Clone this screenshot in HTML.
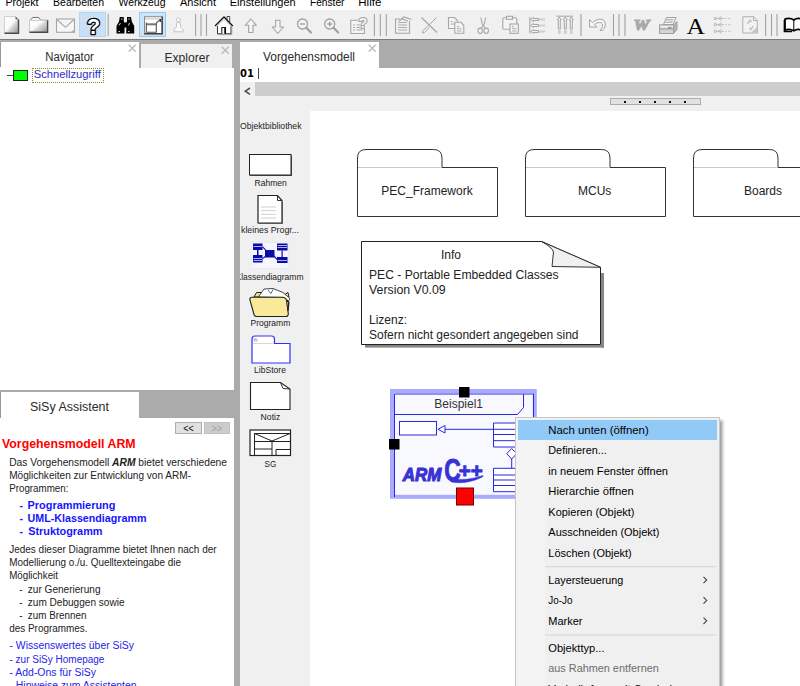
<!DOCTYPE html>
<html lang="de">
<head>
<meta charset="utf-8">
<title>SiSy</title>
<style>
html,body{margin:0;padding:0;}
body{width:800px;height:686px;overflow:hidden;position:relative;background:#fff;font-family:"Liberation Sans",sans-serif;color:#000;}
div{position:absolute;box-sizing:border-box;white-space:nowrap;}
svg{position:absolute;overflow:visible;}
/* menu */
#menu{left:0;top:0;width:800px;height:10px;background:#fff;overflow:hidden;}
/* toolbar */
#tb{left:0;top:10px;width:800px;height:29px;background:#f0f0f0;}
#tbline{left:0;top:38.500px;width:800px;height:1.500px;background:#7c7c7c;}
#tbline2{left:0;top:40px;width:800px;height:2px;background:#ababab;}
.hl{background:#cce4f7;border:1px solid #99d1ff;}
/* left */
#left{left:0;top:42px;width:234px;height:644px;background:#fff;}
#vdiv{left:233.500px;top:42px;width:6.500px;height:644px;background:#ababab;}
/* right */
#right{left:240px;top:42px;width:560px;height:644px;background:#fff;}


</style>
</head>
<body>
<div id="menu"></div>

<div id="tb">
  <div class="hl" style="left:79px;top:2px;width:27.200px;height:25px;background:#c9e0f7;border-color:#b4d4f4"></div>
  <div class="hl" style="left:139.200px;top:2px;width:26.800px;height:25px;background:#cce4f7;border-color:#92c9f7"></div>
<svg width="800" height="29" viewBox="0 10 800 29" style="left:0;top:0">
  <defs>
    <linearGradient id="g1" x1="0" y1="0" x2="1" y2="1">
      <stop offset="0" stop-color="#fff"/><stop offset="0.480" stop-color="#fafafa"/><stop offset="0.600" stop-color="#d8d8d8"/><stop offset="0.800" stop-color="#b8b8b8"/><stop offset="1" stop-color="#8c8c8c"/>
    </linearGradient>
  </defs>
  <!-- separators -->
  <g stroke="#a2a2a2" stroke-width="1.100">
    <path d="M108.200 14 V36 M195.600 14 V36 M201 14 V36 M206.500 14 V36 M374.400 14 V36 M380.300 14 V36 M386.300 14 V36 M581 14 V36 M613.500 14 V36 M619 14 V36 M625 14 V36 M765.600 14 V36 M771.500 14 V36 M777 14 V36"/>
  </g>
  <!-- new doc -->
  <path d="M4.500 16.500 H15.500 L18.300 19.300 V33 H4.500 Z" fill="url(#g1)" stroke="#c8c8c8" stroke-width="0.800"/>
  <path d="M4.500 33.200 H18.500 V19.500" fill="none" stroke="#4a4a4a" stroke-width="1.400"/>
  <path d="M15.500 16.500 V19.300 H18.300 Z" fill="#555"/>
  <!-- folder -->
  <path d="M29.500 32.200 V20 L32.500 17.300 H38.800 L40.500 19.800 H47.500 V32.200 Z" fill="url(#g1)" stroke="#c0c0c0" stroke-width="0.800"/>
  <path d="M31 19.700 L32.800 17.500 H38.600 L40.300 19.700" fill="none" stroke="#777" stroke-width="1"/>
  <path d="M29.500 32.300 H47.600 V20.300" fill="none" stroke="#4a4a4a" stroke-width="1.400"/>
  <path d="M30 20.300 H47" stroke="#bbb" stroke-width="0.800"/>
  <!-- envelope -->
  <rect x="56.500" y="19" width="18" height="13.300" fill="#f6f6f6" stroke="#a6a6a6" stroke-width="1.100"/>
  <path d="M57 19.500 L65.500 27.300 L74 19.500" fill="none" stroke="#a6a6a6" stroke-width="1.100"/>
  <path d="M74.500 29 V32.300 H71 Z" fill="#b0b0b0"/>
  <!-- question mark -->
  <text x="93.500" y="33.600" text-anchor="middle" font-family="Liberation Sans, sans-serif" font-weight="bold" font-size="21.500" fill="#fff" stroke="#000" stroke-width="2.600" stroke-linejoin="round" paint-order="stroke">?</text>
  <!-- binoculars -->
  <g fill="#000">
    <path d="M119.800 17 H123.800 V21 L124.500 24 V33.500 H116.500 V26 L119 21.500 Z"/>
    <path d="M127 17 H131 L131.800 21.500 L134.200 26 V33.500 H126.300 V24 L127 21 Z"/>
    <rect x="123.500" y="22.500" width="4" height="5"/>
  </g>
  <path d="M121 19 h1.500 M128.300 19 h1.500 M119 25.500 l1.500 -2.500 M128.500 25.500 l1 -2.500 M118.500 31.500 h1.500 M128 31.500 h1.500" stroke="#e8e8e8" stroke-width="0.900" fill="none"/>
  <!-- window icon -->
  <rect x="144.500" y="16.700" width="17.500" height="17" fill="#fff" stroke="#8a8a8a" stroke-width="1"/>
  <rect x="145" y="17.200" width="16.500" height="2.600" fill="#dcdcdc"/>
  <path d="M144.300 33.800 H162.200 V16.500" fill="none" stroke="#404040" stroke-width="1.400"/>
  <path d="M146 23 H156 L160 19.500 V32 H146 Z" fill="#fff" stroke="none"/>
  <path d="M146 23.300 H156 V25.300 H146 Z" fill="#777"/>
  <path d="M146.300 22.500 V32.200 H156.300 V23 L160.500 19.300" fill="none" stroke="#555" stroke-width="1.100"/>
  <path d="M160.300 19 v3" stroke="#222" stroke-width="1.200"/>
  <!-- pawn -->
  <path d="M178.500 17.800 a2 2 0 1 1 -0.010 0 Z M177 22.300 H180 L181 27.500 L183 29.500 V31.800 H174.200 V29.500 L176.200 27.500 Z" fill="#fafafa" stroke="#c2c2c2" stroke-width="1"/>
  <!-- house -->
  <path d="M227 20 V16.500 H229.700 V22" fill="#fff" stroke="#444" stroke-width="1"/>
  <path d="M217.300 25 V34 H231.300 V25 L224 17.500 Z" fill="#fff" stroke="none"/>
  <path d="M217.500 26 V33.800 H231 V26" fill="none" stroke="#333" stroke-width="1"/>
  <path d="M231.800 26.500 V34.600 H217.500" fill="none" stroke="#9a9a9a" stroke-width="0.900"/>
  <path d="M215 26 L224 17 L232.800 26" fill="none" stroke="#111" stroke-width="1.300"/>
  <path d="M216.500 26.800 L224 19.300 L231.500 26.800" fill="none" stroke="#b0b0b0" stroke-width="0.700"/>
  <path d="M221.800 33.800 V27.500 H225.500 V33.800" fill="#fff" stroke="#222" stroke-width="1.100"/>
  <path d="M225 28 V33.800" stroke="#000" stroke-width="1.400"/>
  <!-- up / down arrows -->
  <path d="M250.800 19 L256.400 25.300 H253 V32.500 H248.600 V25.300 H245.200 Z" fill="#f4f4f4" stroke="#a4a4a4" stroke-width="1.100" stroke-linejoin="round"/>
  <path d="M277.800 33.500 L283.500 27 H280 V20.200 H275.600 V27 H272.200 Z" fill="#f4f4f4" stroke="#a4a4a4" stroke-width="1.100" stroke-linejoin="round"/>
  <!-- zoom out / in -->
  <g fill="none" stroke="#a0a0a0">
    <circle cx="302.500" cy="24" r="5" stroke-width="1.300" fill="#f4f4f4"/>
    <path d="M300 24 H305" stroke-width="1.400"/>
    <path d="M306.300 27.800 L311 32.500" stroke-width="2.200" stroke-linecap="round"/>
    <circle cx="329.700" cy="24" r="5" stroke-width="1.300" fill="#f4f4f4"/>
    <path d="M327.200 24 H332.200 M329.700 21.500 V26.500" stroke-width="1.400"/>
    <path d="M333.500 27.800 L338.200 32.500" stroke-width="2.200" stroke-linecap="round"/>
  </g>
  <!-- doc with ? -->
  <g fill="none" stroke="#a6a6a6" stroke-width="1.100">
    <path d="M358 20.200 H350.800 V33.500 H364.500 V28.500" fill="#f4f4f4"/>
    <path d="M353 25 h2 M356.500 25 h4 M353 27.500 h2 M356.500 27.500 h4 M353 30 h2 M356.500 30 h6"/>
  </g>
  <text x="363" y="27.800" text-anchor="middle" font-family="Liberation Sans, sans-serif" font-weight="bold" font-size="14.500" fill="#f4f4f4" stroke="#a0a0a0" stroke-width="2" stroke-linejoin="round" paint-order="stroke">?</text>
  <!-- doc with pen -->
  <g fill="none" stroke="#a6a6a6" stroke-width="1.100">
    <path d="M400 19 H395.500 V33.300 H409.500 V21"/>
    <path d="M398 22.500 h9 M398 25 h9 M398 27.500 h9 M398 30 h9" stroke-width="0.900"/>
    <path d="M399 21 L404 17 L411.500 19.500 M402 19 l6 2" stroke-width="1.300"/>
  </g>
  <!-- X -->
  <g fill="none" stroke="#a6a6a6">
    <path d="M421.500 17.500 L437 32.500" stroke-width="1.200"/>
    <path d="M436.500 17.500 L428 26" stroke-width="1"/>
    <path d="M428 25.500 L422.800 31 L422.500 33 L424.500 32.500 L429.500 27" stroke-width="1" fill="#f4f4f4"/>
  </g>
  <!-- copy -->
  <g fill="#f4f4f4" stroke="#a6a6a6" stroke-width="1.100">
    <path d="M448.500 17.500 H454.500 L457.500 20.500 V28.500 H448.500 Z"/>
    <path d="M454.800 22.300 H460.800 L463.800 25.300 V33.300 H454.800 Z"/>
    <path d="M450.500 21.500 h2 M450.500 24 h4 M457 26.500 h2 M457 28.700 h4.500 M457 31 h4.500" fill="none" stroke-width="0.900"/>
  </g>
  <!-- scissors -->
  <g fill="none" stroke="#a6a6a6" stroke-width="1.100">
    <path d="M480.800 17.500 L482.500 25 L485.500 28.500 M485.700 17.500 L484 25 L481 28.500"/>
    <ellipse cx="480.200" cy="30.800" rx="2.200" ry="2.700" fill="#f4f4f4"/>
    <ellipse cx="486.200" cy="30.800" rx="2.200" ry="2.700" fill="#f4f4f4"/>
  </g>
  <!-- paste -->
  <g fill="#f4f4f4" stroke="#a6a6a6" stroke-width="1.100">
    <rect x="502.800" y="17.800" width="14" height="11.500" rx="1.500"/>
    <rect x="506.500" y="16.300" width="6" height="3" />
    <rect x="510" y="24" width="8.300" height="9.300"/>
    <path d="M512 26.500 h2 M512 28.700 h4.500 M512 31 h4.500" fill="none" stroke-width="0.900"/>
  </g>
  <!-- align left -->
  <g fill="none" stroke="#a6a6a6" stroke-width="1">
    <path d="M529.800 17 V33.500"/>
    <path d="M530.500 19.500 l3 -2 v1 h5 v2 h-5 v1 z M530.500 25.500 l3 -2 v1 h5 v2 h-5 v1 z M530.500 31.500 l3 -2 v1 h5 v2 h-5 v1 z"/>
    <path d="M540 18.500 v2 M542 18.500 v2 M544 18.500 v2 M540 24.500 v2 M542 24.500 v2 M544 24.500 v2 M540 30.500 v2 M542 30.500 v2 M544 30.500 v2" stroke-width="0.900"/>
  </g>
  <!-- align top -->
  <g fill="none" stroke="#a6a6a6" stroke-width="1">
    <path d="M556.500 16.200 H573"/>
    <path d="M559.300 17 l2 3 h-1 v9 h-2 v-9 h-1 z M565.300 17 l2 3 h-1 v9 h-2 v-9 h-1 z M571.300 17 l2 3 h-1 v9 h-2 v-9 h-1 z"/>
    <path d="M558 31 h2.600 M564 31 h2.600 M570 31 h2.600 M558 33 h2.600 M564 33 h2.600 M570 33 h2.600" stroke-width="0.900"/>
  </g>
  <!-- undo -->
  <path d="M589.500 19.500 V27 H597 L594.500 24.500 Q600 20.500 602.500 24 Q603.500 27 600 30.500 L602.500 30.500 Q607 26 604.500 21 Q600 16.500 592.500 22.500 Z" fill="#f4f4f4" stroke="#a6a6a6" stroke-width="1" stroke-linejoin="round"/>
  <!-- W -->
  <text x="641.500" y="30" text-anchor="middle" font-family="Liberation Serif, serif" font-weight="bold" font-style="italic" font-size="15.500" fill="#a8a8a8" stroke="#a8a8a8" stroke-width="1.200" textLength="16" lengthAdjust="spacingAndGlyphs">W</text>
  <!-- printer -->
  <g stroke="#a0a0a0" stroke-width="1">
    <path d="M663.500 24.500 L666.500 17.500 H676 L673 24.500 Z" fill="#f4f4f4"/>
    <path d="M666.500 19.500 h7 M666 21 h7 M665.300 22.500 h7" stroke-width="0.700" fill="none"/>
    <path d="M659.500 25 H673.500 L677 21.500 V29.500 L673.500 33.500 H659.500 Z" fill="#b4b4b4"/>
    <rect x="659.500" y="25" width="14" height="4" fill="#e8e8e8"/>
    <rect x="659.500" y="29" width="14" height="4.500" fill="#d4d4d4"/>
    <path d="M668 27.800 h3.500" stroke="#777" stroke-width="1.100"/>
  </g>
  <!-- A -->
  <text x="695.700" y="33.700" text-anchor="middle" font-family="Liberation Serif, serif" font-size="23.500" fill="#000" textLength="18.500" lengthAdjust="spacingAndGlyphs">A</text>
  <!-- arrows list -->
  <g fill="none" stroke="#b6b6b6" stroke-width="0.900">
    <path d="M714.300 17.500 h2 v2 h-2 z M714.300 23.700 h2 v2 h-2 z M714.300 30.300 h2 v2 h-2 z"/>
    <path d="M716.500 18.500 H724 M721.500 16.500 L718.500 18.500 L721.500 20.500 M716.500 24.700 H724 M721.500 22.700 L718.500 24.700 L721.500 26.700 M716.500 31.300 H724 M721.500 29.300 L718.500 31.300 L721.500 33.300"/>
    <path d="M725.500 18.500 h1.200 M728 18.500 h1.200 M730 18.500 h0.800 M725.500 24.700 h1.200 M728 24.700 h1.200 M730 24.700 h0.800 M725.500 31.300 h1.200 M728 31.300 h1.200 M730 31.300 h0.800"/>
  </g>
  <!-- doc arrows -->
  <path d="M742.800 16.700 H753.500 L757.300 20.500 V33 H742.800 Z" fill="#f2f2f2" stroke="#b0b0b0" stroke-width="1"/>
  <path d="M753.500 16.700 V20.500 H757.300" fill="none" stroke="#b0b0b0" stroke-width="0.900"/>
  <path d="M757 27 V32.700 H751 Z" fill="#c4c4c4"/>
  <path d="M747.500 24 Q747.500 21 750.500 21 M749.500 19.500 L751.500 21 L749.500 22.500 M753 26 Q753 29 750 29 M751.500 27.500 L749.500 29 L751.500 30.500" fill="none" stroke="#b4b4b4" stroke-width="1"/>
  <!-- book -->
  <path d="M785 19 Q790 17.500 793.800 20 Q797 17.500 802 19 V30 Q797 28.500 793.800 30.800 Q790 28.500 785 30 Z" fill="#fff" stroke="#000" stroke-width="1.800" stroke-linejoin="round"/>
  <path d="M793.800 20 V30.500" stroke="#000" stroke-width="1"/>
  <path d="M784.300 20 V31.500 H792" fill="none" stroke="#000" stroke-width="1.300"/>
</svg>
</div>
<div id="tbline"></div><div id="tbline2"></div>

<!-- LEFT PANEL -->
<div id="left">
  <div style="left:0;top:0;width:1px;height:25px;background:#9a9a9a"></div>
  <svg style="left:127.9px;top:1.9px" width="9" height="9"><path d="M0.700 0.700 L7.800 7.800 M7.800 0.700 L0.700 7.800" stroke="#bebebe" stroke-width="1.500" fill="none"/></svg>
  <div style="left:139px;top:0;width:102px;height:25.700px;background:#ababab"></div>
  <div style="left:141px;top:2px;width:91.300px;height:23.700px;background:#f0f0f0"></div>
  <svg style="left:221.4px;top:4.2px" width="9" height="9"><path d="M0.700 0.700 L7.800 7.800 M7.800 0.700 L0.700 7.800" stroke="#bebebe" stroke-width="1.500" fill="none"/></svg>
  <!-- tree -->
  <div style="left:7px;top:33px;width:7px;height:1px;background:#444"></div>
  <div style="left:13.200px;top:28px;width:14.500px;height:10.500px;background:#00ff00;border:1px solid #222;border-right-width:1.600px;border-bottom-width:1.600px"></div>
  <div style="left:32px;top:26px;width:72px;height:15px;border:1px dotted #8a8a20"></div>
  <!-- assist tab -->
  <div style="left:0;top:347.800px;width:234px;height:28.600px;background:#ababab"></div>
  <div style="left:0;top:350.400px;width:139px;height:26px;background:#fff;border-left:1px solid #9a9a9a"></div>
  <div style="left:175.200px;top:379.500px;width:26.600px;height:12.400px;background:#e1e1e1;border:1px solid #adadad"></div>
  <div style="left:203.500px;top:379.500px;width:26.600px;height:12.400px;background:#cccccc;border:1px solid #bfbfbf"></div>
  <svg style="left:175px;top:379px" width="56" height="14" viewBox="175 421 56 14" font-family="Liberation Sans, sans-serif" font-size="10.500">
    <text x="183.300" y="432.300" textLength="10.600" lengthAdjust="spacingAndGlyphs" fill="#111">&lt;&lt;</text>
    <text x="211.500" y="432.300" textLength="10.600" lengthAdjust="spacingAndGlyphs" fill="#a0a0a0">&gt;&gt;</text>
  </svg>
  <div id="assist" style="left:0;top:376.400px;width:233.500px;height:270px;overflow:hidden">
  <svg width="234" height="270" viewBox="0 418.400 234 270" style="left:0;top:0" font-family="Liberation Sans, sans-serif" font-size="10" fill="#222">
    <text x="2" y="448.4" textLength="133.6" lengthAdjust="spacingAndGlyphs" font-size="12.300" font-weight="bold" fill="#ff0000">Vorgehensmodell ARM</text>
    <text x="9.2" y="466.4" textLength="217.8" lengthAdjust="spacingAndGlyphs" >Das Vorgehensmodell <tspan font-weight="bold" font-style="italic">ARM</tspan> bietet verschiedene</text>
    <text x="9.2" y="479.3" textLength="181.8" lengthAdjust="spacingAndGlyphs" >Möglichkeiten zur Entwicklung von ARM-</text>
    <text x="9.2" y="492.2" textLength="59.2" lengthAdjust="spacingAndGlyphs" >Programmen:</text>
    <text x="19.5" y="509.7" textLength="3.5" lengthAdjust="spacingAndGlyphs" font-weight="bold" fill="#1414ff">-</text>
    <text x="27.6" y="509.7" textLength="87.8" lengthAdjust="spacingAndGlyphs" font-weight="bold" fill="#1414ff">Programmierung</text>
    <text x="19.5" y="522.6" textLength="3.5" lengthAdjust="spacingAndGlyphs" font-weight="bold" fill="#1414ff">-</text>
    <text x="27.6" y="522.6" textLength="118.8" lengthAdjust="spacingAndGlyphs" font-weight="bold" fill="#1414ff">UML-Klassendiagramm</text>
    <text x="19.5" y="535.6" textLength="3.5" lengthAdjust="spacingAndGlyphs" font-weight="bold" fill="#1414ff">-</text>
    <text x="28.2" y="535.6" textLength="74.3" lengthAdjust="spacingAndGlyphs" font-weight="bold" fill="#1414ff">Struktogramm</text>
    <text x="9.2" y="553.5" textLength="207.4" lengthAdjust="spacingAndGlyphs" >Jedes dieser Diagramme bietet Ihnen nach der</text>
    <text x="9.2" y="566.8" textLength="171.8" lengthAdjust="spacingAndGlyphs" >Modellierung o./u. Quelltexteingabe die</text>
    <text x="9.2" y="579.9" textLength="48.8" lengthAdjust="spacingAndGlyphs" >Möglichkeit</text>
    <text x="19.2" y="593.1" textLength="3.3" lengthAdjust="spacingAndGlyphs" >-</text>
    <text x="27.8" y="593.1" textLength="72.7" lengthAdjust="spacingAndGlyphs" >zur Generierung</text>
    <text x="19.2" y="606.3" textLength="3.3" lengthAdjust="spacingAndGlyphs" >-</text>
    <text x="27.8" y="606.3" textLength="96.7" lengthAdjust="spacingAndGlyphs" >zum Debuggen sowie</text>
    <text x="19.2" y="619.5" textLength="3.3" lengthAdjust="spacingAndGlyphs" >-</text>
    <text x="27.8" y="619.5" textLength="58.6" lengthAdjust="spacingAndGlyphs" >zum Brennen</text>
    <text x="9.2" y="632.6" textLength="78.4" lengthAdjust="spacingAndGlyphs" >des Programmes.</text>
    <text x="9.5" y="649.8" textLength="124.5" lengthAdjust="spacingAndGlyphs" fill="#2424e8">- Wissenswertes über SiSy</text>
    <text x="9.5" y="663.0" textLength="94.9" lengthAdjust="spacingAndGlyphs" fill="#2424e8">- zur SiSy Homepage</text>
    <text x="9.5" y="676.6" textLength="86.5" lengthAdjust="spacingAndGlyphs" fill="#2424e8">- Add-Ons für SiSy</text>
    <text x="9.5" y="689.8" textLength="127.0" lengthAdjust="spacingAndGlyphs" fill="#2424e8">- Hinweise zum Assistenten</text>
  </svg>
  </div>
</div>
<div id="vdiv"></div>

<!-- RIGHT -->
<div id="right">
  <div style="left:139px;top:0;width:421px;height:25.600px;background:#ababab"></div>
  <svg style="left:127.9px;top:1.9px" width="9" height="9"><path d="M0.700 0.700 L7.800 7.800 M7.800 0.700 L0.700 7.800" stroke="#bebebe" stroke-width="1.500" fill="none"/></svg>
  <div style="left:0;top:25.500px;font-family:'DejaVu Sans',sans-serif;font-weight:bold;font-size:10px;line-height:12px;color:#000">01</div>
  <div style="left:17.500px;top:26px;width:1.300px;height:11px;background:#444"></div>
  <div style="left:0;top:40px;width:560px;height:14px;background:#f0f0f0"></div>
  <div style="left:15.200px;top:40px;width:545px;height:13.600px;background:#cdcdcd"></div>
  <svg style="left:0;top:40px" width="15" height="14"><path d="M10 6 L5.300 9.200 L10 12.300" fill="none" stroke="#505050" stroke-width="1.600"/></svg>
  <div style="left:0;top:54px;width:560px;height:590px;background:#f0f0f0"></div>
  <div style="left:369.500px;top:56.200px;width:91.200px;height:7.300px;background:#e1e1e1;border:1px solid #adadad"></div><div style="left:384.2px;top:59px;width:2px;height:2px;background:#111"></div><div style="left:399.2px;top:59px;width:2px;height:2px;background:#111"></div><div style="left:414.2px;top:59px;width:2px;height:2px;background:#111"></div><div style="left:429.2px;top:59px;width:2px;height:2px;background:#111"></div><div style="left:444.1px;top:59px;width:2px;height:2px;background:#111"></div>
  <div style="left:70px;top:68.600px;width:490px;height:576px;background:#fff"></div>
</div>


<!-- LIBRARY -->
<div id="lib" style="left:240px;top:96px;width:70px;height:590px;overflow:hidden">
<svg width="70" height="590" viewBox="240 96 70 590" style="left:0;top:0" font-family="Liberation Sans, sans-serif" font-size="9" fill="#222">
  <text x="240" y="129" font-size="8.800" textLength="61.500" lengthAdjust="spacingAndGlyphs">Objektbibliothek</text>
  <!-- Rahmen -->
  <rect x="250" y="155.500" width="42" height="20.500" fill="#555"/>
  <rect x="249.500" y="154.500" width="41.500" height="20.500" fill="#fff" stroke="#222" stroke-width="1"/>
  <text x="254.500" y="185.800" textLength="32.300" lengthAdjust="spacingAndGlyphs">Rahmen</text>
  <!-- kleines Programm -->
  <path d="M258 195.500 H277.500 L282 200.500 V223 H258 Z" fill="#fff" stroke="#222" stroke-width="1.200"/>
  <path d="M258.500 223.500 H282.500 V202" fill="none" stroke="#555" stroke-width="1"/>
  <path d="M277.500 195.500 V200.500 H282" fill="none" stroke="#333" stroke-width="1"/>
  <path d="M261 207 H276 M261 210.600 H276 M261 214.300 H276 M261 218 H276" stroke="#cfcfcf" stroke-width="1"/>
  <text x="241" y="232.800" textLength="58" lengthAdjust="spacingAndGlyphs">kleines Progr...</text>
  <!-- Klassendiagramm -->
  <rect x="251.500" y="242.500" width="36.500" height="26" fill="#f6f6ff" stroke="#e4e4f4" stroke-width="0.500"/>
  <g fill="#0a0aa8">
    <rect x="253" y="243.500" width="9.500" height="6.500"/>
    <rect x="253" y="255" width="9.500" height="7.500"/>
    <rect x="265" y="250" width="9.500" height="7.500"/>
    <rect x="277" y="243.500" width="10.500" height="7"/>
    <rect x="277" y="257" width="10.500" height="6"/>
    <path d="M257 250 h1.500 v5 h-1.500z M281.500 250.500 h1.200 v6.500 h-1.200z"/>
    <path d="M262.500 246 L266 249.500 L265.200 250.300 L262.500 247.500z M262.500 258 L265 256 L265.600 257 L262.500 259.300z M274.500 255.500 L277 258.500 L277 260 L274 257z"/>
  </g>
  <path d="M253.500 246.500 H262 M253.500 258.500 H262 M253.500 260.500 H262 M277.500 245.500 H287 M277.500 247.500 H287 M277.500 260.500 H287" stroke="#dcdcff" stroke-width="0.800"/>
  <text x="235.500" y="279.800" textLength="68" lengthAdjust="spacingAndGlyphs">Klassendiagramm</text>
  <!-- Programm folder -->
  <path d="M254 297 L256.500 292.500 H263 L265 295 H284 L288 292.500 L289 297 Z" fill="#f6e08a" stroke="#222" stroke-width="1"/>
  <path d="M259 296 L264 289 L273 288.500 L283 292.500 L290 298.500 L288 302 L284 297.500 L259 297 Z" fill="#fff" stroke="#333" stroke-width="0.900" stroke-linejoin="round"/>
  <path d="M268 290 L271 293.500 L273 289.500" fill="none" stroke="#444" stroke-width="0.800"/>
  <path d="M249.800 299.500 Q249.800 297.300 252 297.300 H282 Q286 297.300 286.500 300.500 L288.300 313.500 Q288.500 316.500 285.500 316.500 H257 Q254.500 316.500 254 314.500 Z" fill="#fbe99a" stroke="#222" stroke-width="1.100"/>
  <path d="M286.800 300 L288.800 302.500 L288 311" fill="none" stroke="#222" stroke-width="1.400"/>
  <text x="250.500" y="326.200" textLength="39.800" lengthAdjust="spacingAndGlyphs">Programm</text>
  <!-- LibStore -->
  <path d="M252 363 V339 Q252 336 255 336 H271.500 Q274.500 336 274.500 339 V343.500 H290 V363 Z" fill="#fff" stroke="#3030ff" stroke-width="1.200"/>
  <path d="M253 343.500 H274" stroke="#d8d8d8" stroke-width="1"/>
  <path d="M253.500 338 l3 0 l1.500 3.500 l-4.500 0z" fill="#c8c8c8"/>
  <text x="254.100" y="373" textLength="31.800" lengthAdjust="spacingAndGlyphs">LibStore</text>
  <!-- Notiz -->
  <path d="M250.500 382.500 H280.500 L290 389 V409.500 H250.500 Z" fill="#fff" stroke="#222" stroke-width="1.100"/>
  <path d="M280.500 382.500 L283 388.500 L290 389" fill="none" stroke="#333" stroke-width="1"/>
  <text x="260.600" y="420.200" textLength="19.700" lengthAdjust="spacingAndGlyphs">Notiz</text>
  <!-- SG -->
  <rect x="250" y="430" width="40.500" height="25.500" fill="#fff" stroke="#222" stroke-width="1.200"/>
  <path d="M254.500 455 V433.500 H291 M254.500 433.500 L272 441 L290 433.500 M254.500 441.500 H290 M254.500 449 H272 M272 441 V455 M276 455 V449.500 H290" fill="none" stroke="#222" stroke-width="1"/>
  <text x="264.600" y="467.200" textLength="11.700" lengthAdjust="spacingAndGlyphs">SG</text>
</svg>
</div>
<!-- CANVAS -->
<div id="canvas" style="left:310px;top:111px;width:490px;height:575px;overflow:hidden">
<svg width="490" height="575" viewBox="310 111 490 575" style="left:0;top:0" font-family="Liberation Sans, sans-serif">
  <!-- packages -->
  <g fill="#fff" stroke="#333" stroke-width="1">
    <path id="pk" d="M357.5 216.5 V158 Q357.5 149.5 366 149.5 H433.5 Q442 149.5 442 158 V167.5 H497.5 V216.5 Z"/>
    <path d="M525.5 216.5 V158 Q525.5 149.5 534 149.5 H601.5 Q610 149.5 610 158 V167.5 H665.5 V216.5 Z"/>
    <path d="M693.5 216.5 V158 Q693.5 149.5 702 149.5 H769.5 Q778 149.5 778 158 V167.5 H833.5 V216.5 Z"/>
  </g>
  <g stroke="#c8c8c8" stroke-width="1">
    <path d="M358 167.5 H442 M526 167.5 H610 M694 167.5 H778"/>
  </g>
  <g font-size="12" fill="#222" text-anchor="middle">
    <text x="427" y="195">PEC_Framework</text>
    <text x="594.7" y="195">MCUs</text>
    <text x="763" y="195">Boards</text>
  </g>
  <!-- note -->
  <rect x="365" y="345" width="239" height="2.6" fill="#858585"/>
  <rect x="601" y="273" width="3" height="74.6" fill="#858585"/>
  <path d="M361.500 241.500 H541.500 L600.500 267.300 V344.500 H361.500 Z" fill="#fff" stroke="#222" stroke-width="1"/>
  <path d="M541.500 241.500 Q552 247 553.500 252 L552 266.500 L600.500 267.300 Z" fill="#f0f0f0" stroke="#333" stroke-width="1" stroke-linejoin="round"/>
  <g font-size="12" fill="#222">
    <text x="451" y="258.500" text-anchor="middle">Info</text>
    <text x="369" y="279" textLength="189.600" lengthAdjust="spacingAndGlyphs">PEC - Portable Embedded Classes</text>
    <text x="369" y="294.200" textLength="76.700" lengthAdjust="spacingAndGlyphs">Version V0.09</text>
    <text x="369" y="324">Lizenz:</text>
    <text x="369" y="339">Sofern nicht gesondert angegeben sind</text>
  </g>
  <!-- Beispiel1 -->
  <rect x="392" y="391" width="142.800" height="105.800" fill="#f8f8ff" stroke="#aaaaff" stroke-width="4"/>
  <g fill="none" stroke="#2828e0" stroke-width="1">
    <path d="M394.500 497 V394 H533.500 V497"/>
    <path d="M394.500 414.500 H517.500 L523.500 407.500 V394"/>
    <rect x="399.500" y="421.500" width="37" height="13.500" fill="#fff"/>
    <path d="M445 425.500 L438 429.300 L445 433 Z" fill="#fff"/>
    <path d="M445 429.300 H493"/>
    <path d="M536 423 H493.500 V447 H536 M493.500 429.300 H536 M493.500 434.500 H536 M493.500 440.700 H536" fill="#fff"/>
    <path d="M511.700 448.500 L516.700 453.700 L511.700 459 L506.700 453.700 Z" fill="#fff"/>
    <path d="M511.700 459 V468"/>
    <path d="M536 468.300 H493.500 V491.700 H536 M493.500 475 H536 M493.500 480 H536 M493.500 485.500 H536" fill="#fff"/>
  </g>
  <text x="458.700" y="408.300" font-size="12" fill="#333" text-anchor="middle">Beispiel1</text>
  <!-- ARM C++ logo -->
  <g fill="#3832d2" stroke="#3832d2" font-weight="bold">
    <text x="402.800" y="480.600" font-size="19" font-style="italic" stroke-width="1.100" textLength="38.500" lengthAdjust="spacingAndGlyphs">ARM</text>
    <text x="444.300" y="481.200" font-size="30.500" stroke-width="0.900" textLength="16.500" lengthAdjust="spacingAndGlyphs">C</text>
    <text x="458.800" y="478.200" font-size="20.500" stroke-width="0.900" textLength="24" lengthAdjust="spacingAndGlyphs">++</text>
    <path d="M450 478.500 Q466 481.500 483 475.500 L482.500 477 Q466 485 451 482 Z" stroke-width="0.500"/>
  </g>
  <rect x="459" y="387" width="10.500" height="10.500" fill="#000"/>
  <rect x="389" y="439" width="10.500" height="10.500" fill="#000"/>
  <rect x="456.500" y="488" width="17" height="17" fill="#ff0000" stroke="#700000" stroke-width="1"/>
</svg>
</div>

<!-- CONTEXT MENU -->
<div id="cm" style="left:515px;top:417px;width:204.500px;height:280px;background:#f0f0f0;border:1px solid #c6c6c6;box-shadow:2.500px 2.500px 3px rgba(0,0,0,0.400)">
  <div style="left:0;top:0;width:29px;height:280px;background:#f3f3f3"></div>
  <div style="left:1.500px;top:1.700px;width:199.500px;height:20px;background:#91c9f7"></div>
</div>
<svg width="800" height="686" viewBox="0 0 800 686" style="left:0;top:0;pointer-events:none" font-family="Liberation Sans, sans-serif" font-size="11.500">
<g font-size="11" fill="#000">
  <text x="5.5" y="5.7" textLength="33.0" lengthAdjust="spacingAndGlyphs" >Projekt</text>
  <text x="53" y="5.7" textLength="51.0" lengthAdjust="spacingAndGlyphs" >Bearbeiten</text>
  <text x="118.5" y="5.7" textLength="47.0" lengthAdjust="spacingAndGlyphs" >Werkzeug</text>
  <text x="180" y="5.7" textLength="36.0" lengthAdjust="spacingAndGlyphs" >Ansicht</text>
  <text x="229.8" y="5.7" textLength="65.8" lengthAdjust="spacingAndGlyphs" >Einstellungen</text>
  <text x="310" y="5.7" textLength="34.5" lengthAdjust="spacingAndGlyphs" >Fenster</text>
  <text x="358.3" y="5.7" textLength="23.0" lengthAdjust="spacingAndGlyphs" >Hilfe</text>
</g>
<g font-size="12" fill="#2a2a2a">
  <text x="45.3" y="60.6" textLength="48.5" lengthAdjust="spacingAndGlyphs" >Navigator</text>
  <text x="164.4" y="62.3" textLength="45.1" lengthAdjust="spacingAndGlyphs" >Explorer</text>
  <text x="263" y="60.6" textLength="92.0" lengthAdjust="spacingAndGlyphs" >Vorgehensmodell</text>
  <text x="30" y="410.7" textLength="79.0" lengthAdjust="spacingAndGlyphs" >SiSy Assistent</text>
</g>
  <text x="33.7" y="78.3" textLength="67.1" lengthAdjust="spacingAndGlyphs" font-size="11" fill="#2c2cc4">Schnellzugriff</text>
  <text x="548.300" y="433.75" fill="#000" textLength="100.45" lengthAdjust="spacingAndGlyphs">Nach unten (öffnen)</text>
  <text x="548.300" y="454.20" fill="#000" textLength="58.45" lengthAdjust="spacingAndGlyphs">Definieren...</text>
  <text x="548.300" y="474.70" fill="#000" textLength="119.70" lengthAdjust="spacingAndGlyphs">in neuem Fenster öffnen</text>
  <text x="548.300" y="495.10" fill="#000" textLength="85.45" lengthAdjust="spacingAndGlyphs">Hierarchie öffnen</text>
  <text x="548.300" y="515.60" fill="#000" textLength="86.20" lengthAdjust="spacingAndGlyphs">Kopieren (Objekt)</text>
  <text x="548.300" y="536.00" fill="#000" textLength="111.20" lengthAdjust="spacingAndGlyphs">Ausschneiden (Objekt)</text>
  <text x="548.300" y="556.50" fill="#000" textLength="83.45" lengthAdjust="spacingAndGlyphs">Löschen (Objekt)</text>
  <text x="548.300" y="584.00" fill="#000" textLength="74.95" lengthAdjust="spacingAndGlyphs">Layersteuerung</text>
  <text x="548.300" y="604.40" fill="#000" textLength="24.20" lengthAdjust="spacingAndGlyphs">Jo-Jo</text>
  <text x="548.300" y="624.80" fill="#000" textLength="34.20" lengthAdjust="spacingAndGlyphs">Marker</text>
  <text x="548.300" y="651.80" fill="#000" textLength="56.20" lengthAdjust="spacingAndGlyphs">Objekttyp...</text>
  <text x="548.300" y="672.25" fill="#6d6d6d" textLength="110.45" lengthAdjust="spacingAndGlyphs">aus Rahmen entfernen</text>
  <text x="548.300" y="692.70" fill="#000" textLength="123.70" lengthAdjust="spacingAndGlyphs">Verknüpfung mit Symbol</text>
  <path d="M703.500 576.8 L706.700 580.0 L703.500 583.2" fill="none" stroke="#444" stroke-width="1.100"/>
  <path d="M703.500 597.2 L706.700 600.4 L703.500 603.6" fill="none" stroke="#444" stroke-width="1.100"/>
  <path d="M703.500 617.6 L706.700 620.8 L703.500 624.0" fill="none" stroke="#444" stroke-width="1.100"/>
  <path d="M545 566.700 H716.500 M545 635 H716.500" stroke="#d4d4d4" stroke-width="1"/>
</svg>
</body>
</html>
